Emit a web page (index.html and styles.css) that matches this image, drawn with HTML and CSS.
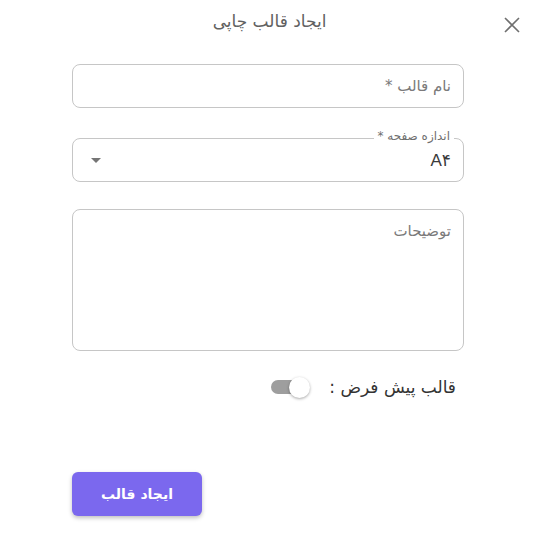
FILE: index.html
```html
<!DOCTYPE html>
<html lang="fa" dir="rtl">
<head>
    <meta charset="UTF-8">
    <meta name="viewport" content="width=device-width, initial-scale=1.0">
    <title>ایجاد قالب چاپی</title>
    <link rel="stylesheet" href="styles.css">
</head>
<body>
    <div class="dialog">
        <div class="dialog-header">
            <h2 class="dialog-title">ایجاد قالب چاپی</h2>
            <button class="close-btn" aria-label="بستن">
                <svg width="16" height="16" viewBox="0 0 16 16">
                    <path d="M1 1 L15 15 M15 1 L1 15" stroke="#6f6f6f" stroke-width="1.6" fill="none"/>
                </svg>
            </button>
        </div>

        <form class="dialog-body">
            <div class="field">
                <input type="text" class="field-input" placeholder="نام قالب *">
            </div>

            <div class="field field-select">
                <span class="field-legend">اندازه صفحه *</span>
                <div class="field-input select-box">
                    <span class="select-value">A۴</span>
                    <span class="select-arrow"></span>
                </div>
            </div>

            <div class="field">
                <textarea class="field-input field-textarea" placeholder="توضیحات"></textarea>
            </div>

            <div class="switch-row">
                <span class="switch-label">قالب پیش فرض :</span>
                <span class="switch">
                    <span class="switch-track"></span>
                    <span class="switch-thumb"></span>
                </span>
            </div>

            <div class="actions">
                <button type="button" class="primary-btn">ایجاد قالب</button>
            </div>
        </form>
    </div>
</body>
</html>
```

FILE: styles.css
```css
/* Base */
body {
    margin: 0;
    padding: 0;
    font-family: "DejaVu Sans", "Noto Sans", sans-serif;
    background-color: #ffffff;
    color: #333;
}

.dialog {
    width: 539px;
    height: 533px;
    box-sizing: border-box;
}

/* Header */
.dialog-header {
    position: relative;
    height: 46px;
    display: flex;
    align-items: center;
    justify-content: center;
}

.dialog-title {
    margin: 0;
    font-size: 17px;
    font-weight: normal;
    color: #616161;
    padding-bottom: 4px;
}

.close-btn {
    position: absolute;
    left: 497px;
    top: 15px;
    width: 30px;
    height: 20px;
    background: none;
    border: none;
    padding: 0;
    cursor: pointer;
    display: flex;
    align-items: center;
    justify-content: center;
}

/* Form */
.dialog-body {
    padding: 18px 75px 0 72px;
}

.field {
    position: relative;
    margin-bottom: 30px;
}

.field-input {
    display: block;
    width: 100%;
    height: 44px;
    box-sizing: border-box;
    border: 1px solid #c6c6c6;
    border-radius: 8px;
    padding: 0 12px;
    font-family: inherit;
    font-size: 15px;
    color: #333;
    background: #fff;
    outline: none;
}

.field-input::placeholder {
    color: #7a7a7a;
}

.field-select {
    margin-bottom: 27px;
}

.field-legend {
    position: absolute;
    top: -9px;
    right: 10px;
    padding: 0 4px;
    background: #fff;
    font-size: 12px;
    color: #6f6f6f;
    line-height: 15px;
}

.select-box {
    display: flex;
    align-items: center;
    justify-content: space-between;
    padding: 0 12px 0 18px;
}

.select-value {
    font-size: 17px;
    color: #3a3a3a;
    font-family: "Liberation Sans", "DejaVu Sans", sans-serif;
}

.select-arrow {
    width: 0;
    height: 0;
    border-left: 5px solid transparent;
    border-right: 5px solid transparent;
    border-top: 5px solid #757575;
}

.field-textarea {
    height: 142px;
    padding: 11px 12px;
    resize: none;
    line-height: 20px;
}

/* Switch */
.switch-row {
    display: flex;
    align-items: center;
    gap: 16px;
    padding-right: 8px;
    margin-top: -5px;
}

.switch-label {
    font-size: 17px;
    color: #333;
}

.switch {
    position: relative;
    width: 42px;
    height: 22px;
    display: inline-block;
}

.switch-track {
    position: absolute;
    right: 6px;
    top: 4px;
    width: 36px;
    height: 14px;
    border-radius: 7px;
    background: #9e9e9e;
}

.switch-thumb {
    position: absolute;
    left: 18px;
    top: 1px;
    width: 21px;
    height: 21px;
    border-radius: 50%;
    background: #fff;
    box-shadow: 0 1px 3px rgba(0, 0, 0, 0.35);
}

/* Actions */
.actions {
    display: flex;
    justify-content: flex-end;
    margin-top: 74px;
}

.primary-btn {
    width: 130px;
    height: 44px;
    background-color: #7b68ee;
    color: #ffffff;
    border: none;
    border-radius: 6px;
    font-family: inherit;
    font-size: 14px;
    font-weight: bold;
    cursor: pointer;
    box-shadow: 0 2px 4px rgba(0, 0, 0, 0.25);
}
```
